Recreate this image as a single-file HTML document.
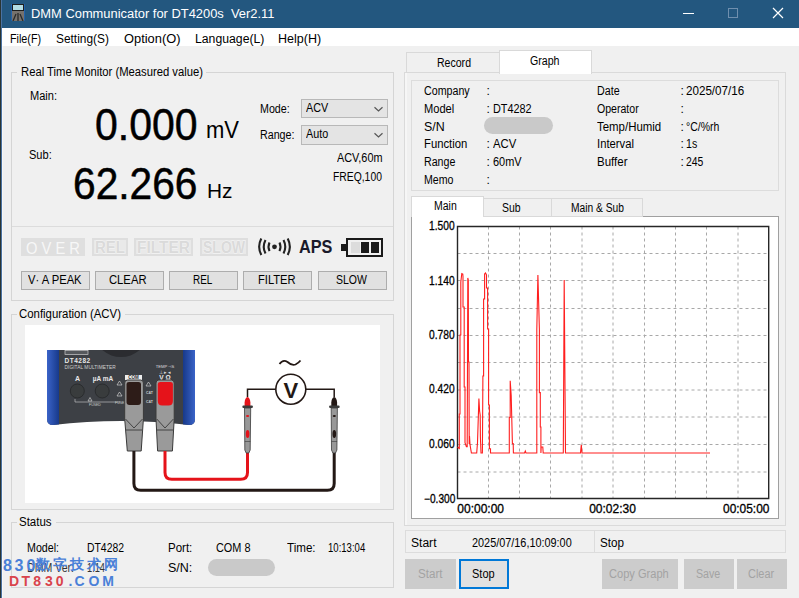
<!DOCTYPE html>
<html><head><meta charset="utf-8"><style>
html,body{margin:0;padding:0;}
body{width:799px;height:598px;overflow:hidden;position:relative;background:#f0f0f0;font-family:'Liberation Sans', sans-serif;}
.a{position:absolute;}
.t{white-space:pre;transform-origin:0 0;}
</style></head><body>
<div class="a" style="left:0px;top:0px;width:799px;height:28px;background:#23577f;"></div>
<div class="a" style="left:0px;top:0px;width:1px;height:598px;background:#2a3533;"></div>
<div class="a" style="left:1px;top:0px;width:1px;height:598px;background:#4a72a2;"></div>
<div class="a" style="left:2px;top:28px;width:1px;height:570px;background:#f7f7f7;"></div>
<div class="a" style="left:11px;top:4px;width:14px;height:17px;background:#2262ac;"></div>
<div class="a" style="left:12px;top:4px;width:12px;height:17px;background:#1e1e1e;"></div>
<div class="a" style="left:13px;top:5px;width:10px;height:5px;background:#b3dde4;"></div>
<div class="a" style="left:12px;top:11px;width:12px;height:10px;background:#77726d;"></div>
<svg class="a" style="left:12px;top:11px" width="12" height="10"><path d="M1 10 L4 3 M6 10 L6 2 M11 10 L8 3" stroke="#2a2a2a" stroke-width="1.3"/></svg>
<div class="a t" style="left:31.20px;top:8.02px;font-size:12.5px;line-height:12.5px;font-weight:400;color:#ffffff;font-family:'Liberation Sans', sans-serif;transform:scaleX(1.0319);">DMM Communicator for DT4200s&nbsp;&nbsp;Ver2.11</div>
<div class="a" style="left:683px;top:13px;width:11px;height:1px;background:#ffffff;"></div>
<div class="a" style="left:728px;top:8px;width:10px;height:10px;box-sizing:border-box;border:1px solid #6f8fae;"></div>
<svg class="a" style="left:772px;top:7px" width="12" height="12"><path d="M1 1L11 11M11 1L1 11" stroke="#fff" stroke-width="1.2"/></svg>
<div class="a" style="left:2px;top:28px;width:797px;height:18px;background:#ffffff;"></div>
<div class="a t" style="left:9.60px;top:32.74px;font-size:12px;line-height:12px;font-weight:400;color:#000;font-family:'Liberation Sans', sans-serif;transform:scaleX(0.8970);">File(F)</div>
<div class="a t" style="left:55.70px;top:32.74px;font-size:12px;line-height:12px;font-weight:400;color:#000;font-family:'Liberation Sans', sans-serif;transform:scaleX(0.9914);">Setting(S)</div>
<div class="a t" style="left:123.50px;top:32.74px;font-size:12px;line-height:12px;font-weight:400;color:#000;font-family:'Liberation Sans', sans-serif;transform:scaleX(1.0724);">Option(O)</div>
<div class="a t" style="left:194.60px;top:32.74px;font-size:12px;line-height:12px;font-weight:400;color:#000;font-family:'Liberation Sans', sans-serif;transform:scaleX(1.0197);">Language(L)</div>
<div class="a t" style="left:278.40px;top:32.74px;font-size:12px;line-height:12px;font-weight:400;color:#000;font-family:'Liberation Sans', sans-serif;transform:scaleX(1.0425);">Help(H)</div>
<div class="a" style="left:11px;top:72px;width:383px;height:229px;box-sizing:border-box;border:1px solid #d5d5d5;"></div>
<div class="a" style="left:17px;top:66px;width:189px;height:12px;background:#f0f0f0;"></div>
<div class="a t" style="left:20.50px;top:65.84px;font-size:12px;line-height:12px;font-weight:400;color:#000;font-family:'Liberation Sans', sans-serif;transform:scaleX(0.9378);">Real Time Monitor (Measured value)</div>
<div class="a t" style="left:29.90px;top:90.24px;font-size:12px;line-height:12px;font-weight:400;color:#000;font-family:'Liberation Sans', sans-serif;transform:scaleX(0.9201);">Main:</div>
<div class="a t" style="left:29.30px;top:149.14px;font-size:12px;line-height:12px;font-weight:400;color:#000;font-family:'Liberation Sans', sans-serif;transform:scaleX(0.9195);">Sub:</div>
<div class="a t" style="left:95.30px;top:103.15px;font-size:44px;line-height:44px;font-weight:400;color:#000;font-family:'Liberation Sans', sans-serif;transform:scaleX(0.9309);-webkit-text-stroke:0.5px #000;">0.000</div>
<div class="a t" style="left:206.30px;top:119.13px;font-size:23px;line-height:23px;font-weight:400;color:#000;font-family:'Liberation Sans', sans-serif;transform:scaleX(0.9565);">mV</div>
<div class="a t" style="left:72.50px;top:162.78px;font-size:43.5px;line-height:43.5px;font-weight:400;color:#000;font-family:'Liberation Sans', sans-serif;transform:scaleX(0.9357);-webkit-text-stroke:0.5px #000;">62.266</div>
<div class="a t" style="left:207.40px;top:181.27px;font-size:20px;line-height:20px;font-weight:400;color:#000;font-family:'Liberation Sans', sans-serif;transform:scaleX(1.0428);">Hz</div>
<div class="a t" style="left:259.70px;top:103.24px;font-size:12px;line-height:12px;font-weight:400;color:#000;font-family:'Liberation Sans', sans-serif;transform:scaleX(0.8903);">Mode:</div>
<div class="a t" style="left:259.70px;top:129.44px;font-size:12px;line-height:12px;font-weight:400;color:#000;font-family:'Liberation Sans', sans-serif;transform:scaleX(0.8914);">Range:</div>
<div class="a" style="left:301px;top:99px;width:87px;height:19px;background:#e4e4e4;box-sizing:border-box;border:1px solid #b8b8b8;"></div>
<div class="a t" style="left:305.70px;top:102.24px;font-size:12px;line-height:12px;font-weight:400;color:#000;font-family:'Liberation Sans', sans-serif;transform:scaleX(0.8992);">ACV</div>
<svg class="a" style="left:372px;top:105px" width="12" height="8"><path d="M2.5 2.2L6.5 6L10.5 2.2" stroke="#555" stroke-width="1.2" fill="none"/></svg>
<div class="a" style="left:301px;top:125px;width:87px;height:19.5px;background:#e4e4e4;box-sizing:border-box;border:1px solid #b8b8b8;"></div>
<div class="a t" style="left:305.70px;top:128.24px;font-size:12px;line-height:12px;font-weight:400;color:#000;font-family:'Liberation Sans', sans-serif;transform:scaleX(0.8992);">Auto</div>
<svg class="a" style="left:372px;top:131px" width="12" height="8"><path d="M2.5 2.2L6.5 6L10.5 2.2" stroke="#555" stroke-width="1.2" fill="none"/></svg>
<div class="a t" style="left:336.80px;top:151.54px;font-size:12px;line-height:12px;font-weight:400;color:#000;font-family:'Liberation Sans', sans-serif;transform:scaleX(0.9055);">ACV,60m</div>
<div class="a t" style="left:333.40px;top:170.84px;font-size:12px;line-height:12px;font-weight:400;color:#000;font-family:'Liberation Sans', sans-serif;transform:scaleX(0.8624);">FREQ,100</div>
<div class="a" style="left:12px;top:226px;width:381px;height:1px;background:#dcdcdc;"></div>
<div class="a" style="left:21px;top:238px;width:64px;height:18px;background:#dfdfdf;"></div>
<div class="a t" style="left:26.00px;top:240.03px;font-size:16.5px;line-height:16.5px;font-weight:400;color:#f7f7f7;font-family:'Liberation Sans', sans-serif;transform:scaleX(0.8923);">O V E R</div>
<div class="a" style="left:92px;top:238px;width:36px;height:18px;background:#e9e9e9;box-sizing:border-box;border:2px solid #dedede;"></div>
<div class="a t" style="left:95.00px;top:239.96px;font-size:16px;line-height:16px;font-weight:700;color:#dadada;font-family:'Liberation Sans', sans-serif;transform:scaleX(0.9375);-webkit-text-stroke:0.8px #f7f7f7;paint-order:stroke fill;">REL</div>
<div class="a" style="left:134px;top:238px;width:59px;height:18px;background:#e9e9e9;box-sizing:border-box;border:2px solid #dedede;"></div>
<div class="a t" style="left:137.00px;top:239.96px;font-size:16px;line-height:16px;font-weight:700;color:#dadada;font-family:'Liberation Sans', sans-serif;transform:scaleX(0.9669);-webkit-text-stroke:0.8px #f7f7f7;paint-order:stroke fill;">FILTER</div>
<div class="a" style="left:200px;top:238px;width:48px;height:18px;background:#e9e9e9;box-sizing:border-box;border:2px solid #dedede;"></div>
<div class="a t" style="left:203.00px;top:239.96px;font-size:16px;line-height:16px;font-weight:700;color:#dadada;font-family:'Liberation Sans', sans-serif;transform:scaleX(0.8750);-webkit-text-stroke:0.8px #f7f7f7;paint-order:stroke fill;">SLOW</div>
<svg class="a" style="left:256px;top:236px" width="38" height="22">
<circle cx="18.5" cy="10.8" r="2.4" fill="#222"/>
<path d="M13.5 6.5 Q11.5 10.8 13.5 15.1" stroke="#222" stroke-width="2.1" fill="none"/>
<path d="M9.5 4 Q6 10.8 9.5 17.6" stroke="#222" stroke-width="2.1" fill="none"/>
<path d="M5.3 2.5 Q1 10.8 5.3 19" stroke="#222" stroke-width="2.1" fill="none"/>
<path d="M23.5 6.5 Q25.5 10.8 23.5 15.1" stroke="#222" stroke-width="2.1" fill="none"/>
<path d="M27.5 4 Q31 10.8 27.5 17.6" stroke="#222" stroke-width="2.1" fill="none"/>
<path d="M31.7 2.5 Q36 10.8 31.7 19" stroke="#222" stroke-width="2.1" fill="none"/>
</svg>
<div class="a t" style="left:299.20px;top:237.84px;font-size:18.5px;line-height:18.5px;font-weight:700;color:#1a1a2a;font-family:'Liberation Sans', sans-serif;transform:scaleX(0.8779);">APS</div>
<div class="a" style="left:341px;top:244px;width:6px;height:7px;background:#1a1a1a;"></div>
<div class="a" style="left:346px;top:238px;width:37px;height:19px;background:#f0f0f0;box-sizing:border-box;border:2px solid #1a1a1a;"></div>
<div class="a" style="left:351px;top:242px;width:9px;height:11px;background:#dcdcdc;"></div>
<div class="a" style="left:361px;top:242px;width:8px;height:11px;background:#1a1a1a;"></div>
<div class="a" style="left:371px;top:242px;width:8px;height:11px;background:#1a1a1a;"></div>
<div class="a" style="left:21px;top:271px;width:69px;height:19px;background:#e1e1e1;box-sizing:border-box;border:1px solid #adadad;"></div>
<div class="a t" style="left:27.70px;top:274.14px;font-size:12px;line-height:12px;font-weight:400;color:#000;font-family:'Liberation Sans', sans-serif;transform:scaleX(0.9342);">V· A PEAK</div>
<div class="a" style="left:95px;top:271px;width:69px;height:19px;background:#e1e1e1;box-sizing:border-box;border:1px solid #adadad;"></div>
<div class="a t" style="left:109.05px;top:274.14px;font-size:12px;line-height:12px;font-weight:400;color:#000;font-family:'Liberation Sans', sans-serif;transform:scaleX(0.9371);">CLEAR</div>
<div class="a" style="left:169px;top:271px;width:69px;height:19px;background:#e1e1e1;box-sizing:border-box;border:1px solid #adadad;"></div>
<div class="a t" style="left:192.75px;top:274.14px;font-size:12px;line-height:12px;font-weight:400;color:#000;font-family:'Liberation Sans', sans-serif;transform:scaleX(0.8268);">REL</div>
<div class="a" style="left:243px;top:271px;width:69px;height:19px;background:#e1e1e1;box-sizing:border-box;border:1px solid #adadad;"></div>
<div class="a t" style="left:258.40px;top:274.14px;font-size:12px;line-height:12px;font-weight:400;color:#000;font-family:'Liberation Sans', sans-serif;transform:scaleX(0.9295);">FILTER</div>
<div class="a" style="left:318px;top:271px;width:69px;height:19px;background:#e1e1e1;box-sizing:border-box;border:1px solid #adadad;"></div>
<div class="a t" style="left:336.45px;top:274.14px;font-size:12px;line-height:12px;font-weight:400;color:#000;font-family:'Liberation Sans', sans-serif;transform:scaleX(0.8743);">SLOW</div>
<div class="a" style="left:11px;top:314px;width:383px;height:196px;box-sizing:border-box;border:1px solid #d5d5d5;"></div>
<div class="a" style="left:17px;top:308px;width:108px;height:12px;background:#f0f0f0;"></div>
<div class="a t" style="left:19.20px;top:307.64px;font-size:12px;line-height:12px;font-weight:400;color:#000;font-family:'Liberation Sans', sans-serif;transform:scaleX(0.9498);">Configuration (ACV)</div>
<div class="a" style="left:25px;top:325px;width:355px;height:178px;background:#ffffff;"></div>
<svg class="a" style="left:0;top:0" width="799" height="598">
<defs>
<clipPath id="bodyclip"><path d="M47 350 H195 V419 Q195 425 189 425 Q121 417 53 425 Q47 425 47 419 Z"/></clipPath>
<linearGradient id="blueL" x1="0" x2="1"><stop offset="0" stop-color="#3a63c8"/><stop offset="1" stop-color="#17398a"/></linearGradient>
<linearGradient id="blueR" x1="0" x2="1"><stop offset="0" stop-color="#17398a"/><stop offset="1" stop-color="#3a63c8"/></linearGradient>
</defs>
<g clip-path="url(#bodyclip)">
<rect x="47" y="350" width="148" height="80" fill="#3d4045"/>
<rect x="47" y="350" width="12" height="80" fill="url(#blueL)"/>
<rect x="183" y="350" width="12" height="80" fill="url(#blueR)"/>
<ellipse cx="121" cy="336" rx="25" ry="21" fill="#2b2c30"/>
</g>
<rect x="65" y="350.5" width="23" height="4" fill="#55585c" stroke="#ccc" stroke-width="0.7"/>
<text x="64.5" y="363" font-family="Liberation Sans" font-weight="700" font-size="6.5" fill="#e8e8e8" letter-spacing="0.5">DT4282</text>
<text x="64.5" y="368.5" font-family="Liberation Sans" font-size="4.8" fill="#cfcfcf" letter-spacing="0.05">DIGITAL MULTIMETER</text>
<text x="77.5" y="381" font-family="Liberation Sans" font-weight="700" font-size="7" fill="#e8e8e8" text-anchor="middle">A</text>
<text x="103" y="381" font-family="Liberation Sans" font-weight="700" font-size="6.5" fill="#e8e8e8" text-anchor="middle">µA mA</text>
<circle cx="77.3" cy="391" r="7" fill="#393c3d" stroke="#2a2c2e" stroke-width="1"/>
<circle cx="102.2" cy="391" r="7" fill="#393c3d" stroke="#2a2c2e" stroke-width="1"/>
<path d="M75 399 V402 H120" stroke="#bbb" stroke-width="0.7" fill="none"/>
<path d="M88 401 l2 -3.5 l2 3.5 z M117 385 l2.5 -4 l2.5 4 z M117 396 l2.5 -4 l2.5 4 z M146 386 l2.5 -4 l2.5 4z" fill="none" stroke="#ccc" stroke-width="0.7"/>
<text x="89" y="406" font-family="Liberation Sans" font-size="3.5" fill="#ccc">FUSED</text>
<text x="115" y="404" font-family="Liberation Sans" font-size="3.5" fill="#ccc">FUSED</text>
<text x="146" y="394" font-family="Liberation Sans" font-weight="700" font-size="3.5" fill="#ccc">CAT</text>
<text x="146" y="403" font-family="Liberation Sans" font-weight="700" font-size="3.5" fill="#ccc">CAT</text>
<rect x="125" y="375" width="17" height="5" fill="#eee"/>
<text x="133.5" y="379.3" font-family="Liberation Sans" font-weight="700" font-size="4.5" fill="#333" text-anchor="middle">COM</text>
<text x="165" y="367.5" font-family="Liberation Sans" font-size="4.2" fill="#ddd" text-anchor="middle">TEMP ⊣S</text>
<text x="165" y="373.5" font-family="Liberation Sans" font-size="4.5" fill="#ddd" text-anchor="middle">⊥ ▸ ◂</text>
<text x="165" y="380" font-family="Liberation Sans" font-weight="700" font-size="6.5" fill="#eee" text-anchor="middle">V Ω</text>
<!-- COM plug -->
<path d="M124.7 383 Q124.7 380 127.5 380 H140.6 Q143.4 380 143.4 383 V419 L141.2 451 H127.3 L124.7 419 Z" fill="#9a9a9a" stroke="#3a3a3a" stroke-width="1"/>
<path d="M126.5 384 Q126.5 382 129 382 H138.5 Q141 382 141 384 V402 Q141 405 138 405 H129.5 Q126.5 405 126.5 402 Z" fill="#2d1c18"/>
<path d="M125.5 419 L134 428 L142.5 419 M126 430 H142" stroke="#3a3a3a" stroke-width="0.9" fill="none"/>
<!-- red plug -->
<path d="M156 383 Q156 380 158.8 380 H171.4 Q174.2 380 174.2 383 V419 L172.4 451 H157.6 L156 419 Z" fill="#9a9a9a" stroke="#3a3a3a" stroke-width="1"/>
<path d="M157.8 384 Q157.8 382 160.3 382 H170.4 Q172.9 382 172.9 384 V401 Q172.9 405.5 168.5 405.5 H162.2 Q157.8 405.5 157.8 401 Z" fill="#e5131a"/>
<path d="M156.8 419 L165 428 L173.4 419 M157 430 H173" stroke="#3a3a3a" stroke-width="0.9" fill="none"/>
<!-- wires -->
<path d="M133.9 451 V483.5 Q133.9 490.3 140.7 490.3 H327.4 Q334.2 490.3 334.2 483.5 V452" stroke="#231815" stroke-width="3" fill="none"/>
<path d="M165 451 V472.5 Q165 479.3 171.8 479.3 H240.7 Q247.5 479.3 247.5 472.5 V452" stroke="#e5131a" stroke-width="3" fill="none"/>
<!-- meter -->
<path d="M247.5 397 V389.3 H275.8 M305.8 389.3 H334.2 V397" stroke="#231815" stroke-width="1.5" fill="none"/>
<circle cx="290.8" cy="389.3" r="15" fill="#fff" stroke="#231815" stroke-width="1.6"/>
<text x="290.8" y="397.5" font-family="Liberation Sans" font-weight="700" font-size="22" fill="#231815" text-anchor="middle">V</text>
<path d="M279.5 364 Q283 359 287.5 362 Q292 366 295.5 364.5 Q298.5 363 300.5 360.5" stroke="#231815" stroke-width="1.8" fill="none"/>
<!-- red probe -->
<path d="M244.6 406 V402.5 Q245 397.5 247.5 397 Q250 397.5 250.4 402.5 V406 Z" fill="#e5131a"/>
<rect x="242.4" y="405.5" width="10.5" height="2.5" rx="1" fill="#3a3a3a"/>
<path d="M244.5 408 H250.7 L250.2 450 L248.8 453 H246.2 L244.8 450 Z" fill="#989898" stroke="#3a3a3a" stroke-width="0.8"/>
<ellipse cx="247.6" cy="416" rx="1.6" ry="0.9" fill="#e5131a"/>
<ellipse cx="247.6" cy="434" rx="1.8" ry="4" fill="#e5131a"/>
<line x1="244.8" y1="441.5" x2="250.4" y2="441.5" stroke="#3a3a3a" stroke-width="0.6"/>
<!-- black probe -->
<path d="M331.3 406 V402.5 Q331.7 397.5 334.2 397 Q336.7 397.5 337.1 402.5 V406 Z" fill="#231815"/>
<rect x="329.1" y="405.5" width="10.5" height="2.5" rx="1" fill="#3a3a3a"/>
<path d="M331.2 408 H337.4 L336.9 450 L335.5 453 H332.9 L331.5 450 Z" fill="#989898" stroke="#3a3a3a" stroke-width="0.8"/>
<ellipse cx="334.3" cy="416" rx="1.6" ry="0.9" fill="#231815"/>
<ellipse cx="334.3" cy="434" rx="1.8" ry="4" fill="#231815"/>
<line x1="331.5" y1="441.5" x2="337.1" y2="441.5" stroke="#3a3a3a" stroke-width="0.6"/>
</svg>
<div class="a" style="left:11px;top:522px;width:383px;height:66px;box-sizing:border-box;border:1px solid #d5d5d5;"></div>
<div class="a" style="left:17px;top:516px;width:39px;height:12px;background:#f0f0f0;"></div>
<div class="a t" style="left:19.10px;top:515.64px;font-size:12px;line-height:12px;font-weight:400;color:#000;font-family:'Liberation Sans', sans-serif;transform:scaleX(0.9579);">Status</div>
<div class="a t" style="left:27.20px;top:541.94px;font-size:12px;line-height:12px;font-weight:400;color:#000;font-family:'Liberation Sans', sans-serif;transform:scaleX(0.8881);">Model:</div>
<div class="a t" style="left:87.30px;top:541.94px;font-size:12px;line-height:12px;font-weight:400;color:#000;font-family:'Liberation Sans', sans-serif;transform:scaleX(0.8664);">DT4282</div>
<div class="a t" style="left:167.70px;top:542.04px;font-size:12px;line-height:12px;font-weight:400;color:#000;font-family:'Liberation Sans', sans-serif;transform:scaleX(0.9588);">Port:</div>
<div class="a t" style="left:215.50px;top:542.04px;font-size:12px;line-height:12px;font-weight:400;color:#000;font-family:'Liberation Sans', sans-serif;transform:scaleX(0.9075);">COM 8</div>
<div class="a t" style="left:287.10px;top:542.04px;font-size:12px;line-height:12px;font-weight:400;color:#000;font-family:'Liberation Sans', sans-serif;transform:scaleX(0.9674);">Time:</div>
<div class="a t" style="left:327.80px;top:542.04px;font-size:12px;line-height:12px;font-weight:400;color:#000;font-family:'Liberation Sans', sans-serif;transform:scaleX(0.7963);">10:13:04</div>
<div class="a t" style="left:27.20px;top:561.84px;font-size:12px;line-height:12px;font-weight:400;color:#333;font-family:'Liberation Sans', sans-serif;transform:scaleX(0.8811);">DMM Ver:</div>
<div class="a t" style="left:87.30px;top:561.84px;font-size:12px;line-height:12px;font-weight:400;color:#333;font-family:'Liberation Sans', sans-serif;transform:scaleX(0.7706);">1.14</div>
<div class="a t" style="left:167.70px;top:562.44px;font-size:12px;line-height:12px;font-weight:400;color:#000;font-family:'Liberation Sans', sans-serif;transform:scaleX(1.0410);">S/N:</div>
<div class="a" style="left:208px;top:559px;width:67px;height:17px;background:#c9c9c9;border-radius:9px;"></div>
<div class="a" style="left:3.0px;top:558px;font-family:'Liberation Sans', sans-serif;font-weight:700;font-size:16px;line-height:16px;color:#4a80d8;">8</div>
<div class="a" style="left:14.6px;top:558px;font-family:'Liberation Sans', sans-serif;font-weight:700;font-size:16px;line-height:16px;color:#4a80d8;">3</div>
<div class="a" style="left:26.4px;top:558px;font-family:'Liberation Sans', sans-serif;font-weight:700;font-size:16px;line-height:16px;color:#4a80d8;">0</div>
<div class="a" style="left:35.5px;top:557px;font-family:'Liberation Sans', sans-serif;font-weight:700;font-size:14px;line-height:15px;color:#4a80d8;">数</div>
<div class="a" style="left:53px;top:557px;font-family:'Liberation Sans', sans-serif;font-weight:700;font-size:14px;line-height:15px;color:#4a80d8;">字</div>
<div class="a" style="left:70px;top:557px;font-family:'Liberation Sans', sans-serif;font-weight:700;font-size:14px;line-height:15px;color:#4a80d8;">技</div>
<div class="a" style="left:87px;top:557px;font-family:'Liberation Sans', sans-serif;font-weight:700;font-size:14px;line-height:15px;color:#4a80d8;">术</div>
<div class="a" style="left:104px;top:557px;font-family:'Liberation Sans', sans-serif;font-weight:700;font-size:14px;line-height:15px;color:#4a80d8;">网</div>
<div class="a" style="left:9.0px;top:574px;font-family:'Liberation Sans', sans-serif;font-weight:700;font-size:14px;line-height:14px;color:#d9444c;">D</div>
<div class="a" style="left:21.6px;top:574px;font-family:'Liberation Sans', sans-serif;font-weight:700;font-size:14px;line-height:14px;color:#d9444c;">T</div>
<div class="a" style="left:33.2px;top:574px;font-family:'Liberation Sans', sans-serif;font-weight:700;font-size:14px;line-height:14px;color:#d9444c;">8</div>
<div class="a" style="left:45.0px;top:574px;font-family:'Liberation Sans', sans-serif;font-weight:700;font-size:14px;line-height:14px;color:#d9444c;">3</div>
<div class="a" style="left:55.7px;top:574px;font-family:'Liberation Sans', sans-serif;font-weight:700;font-size:14px;line-height:14px;color:#d9444c;">0</div>
<div class="a" style="left:68.5px;top:574px;font-family:'Liberation Sans', sans-serif;font-weight:700;font-size:14px;line-height:14px;color:#4a80d8;">.</div>
<div class="a" style="left:74.5px;top:574px;font-family:'Liberation Sans', sans-serif;font-weight:700;font-size:14px;line-height:14px;color:#4a80d8;">C</div>
<div class="a" style="left:88.5px;top:574px;font-family:'Liberation Sans', sans-serif;font-weight:700;font-size:14px;line-height:14px;color:#4a80d8;">O</div>
<div class="a" style="left:102.2px;top:574px;font-family:'Liberation Sans', sans-serif;font-weight:700;font-size:14px;line-height:14px;color:#4a80d8;">M</div>
<div class="a" style="left:404px;top:72px;width:382px;height:454px;background:#f0f0f0;box-sizing:border-box;border:1px solid #dadada;"></div>
<div class="a" style="left:405px;top:73px;width:2px;height:452px;background:#f6f6f6;"></div>
<div class="a" style="left:406px;top:52px;width:94px;height:21px;background:#f0f0f0;box-sizing:border-box;border:1px solid #d9d9d9;"></div>
<div class="a" style="left:499px;top:50px;width:93px;height:24px;background:#ffffff;box-sizing:border-box;border:1px solid #d9d9d9;border-bottom:none;"></div>
<div class="a t" style="left:436.80px;top:56.84px;font-size:12px;line-height:12px;font-weight:400;color:#000;font-family:'Liberation Sans', sans-serif;transform:scaleX(0.8788);">Record</div>
<div class="a t" style="left:530.05px;top:54.84px;font-size:12px;line-height:12px;font-weight:400;color:#000;font-family:'Liberation Sans', sans-serif;transform:scaleX(0.8843);">Graph</div>
<div class="a" style="left:411px;top:80px;width:368px;height:111px;box-sizing:border-box;border:1px solid #dcdcdc;"></div>
<div class="a t" style="left:423.80px;top:85.14px;font-size:12px;line-height:12px;font-weight:400;color:#000;font-family:'Liberation Sans', sans-serif;transform:scaleX(0.8898);">Company</div>
<div class="a t" style="left:486.60px;top:85.14px;font-size:12px;line-height:12px;font-weight:400;color:#000;font-family:'Liberation Sans', sans-serif;">:</div>
<div class="a t" style="left:423.80px;top:102.89px;font-size:12px;line-height:12px;font-weight:400;color:#000;font-family:'Liberation Sans', sans-serif;transform:scaleX(0.9239);">Model</div>
<div class="a t" style="left:486.60px;top:102.89px;font-size:12px;line-height:12px;font-weight:400;color:#000;font-family:'Liberation Sans', sans-serif;">:</div>
<div class="a t" style="left:493.20px;top:102.89px;font-size:12px;line-height:12px;font-weight:400;color:#000;font-family:'Liberation Sans', sans-serif;transform:scaleX(0.9039);">DT4282</div>
<div class="a t" style="left:423.80px;top:120.64px;font-size:12px;line-height:12px;font-weight:400;color:#000;font-family:'Liberation Sans', sans-serif;transform:scaleX(1.0342);">S/N</div>
<div class="a t" style="left:423.80px;top:138.39px;font-size:12px;line-height:12px;font-weight:400;color:#000;font-family:'Liberation Sans', sans-serif;transform:scaleX(0.9407);">Function</div>
<div class="a t" style="left:486.60px;top:138.39px;font-size:12px;line-height:12px;font-weight:400;color:#000;font-family:'Liberation Sans', sans-serif;">:</div>
<div class="a t" style="left:493.20px;top:138.39px;font-size:12px;line-height:12px;font-weight:400;color:#000;font-family:'Liberation Sans', sans-serif;transform:scaleX(0.9438);">ACV</div>
<div class="a t" style="left:423.80px;top:156.14px;font-size:12px;line-height:12px;font-weight:400;color:#000;font-family:'Liberation Sans', sans-serif;transform:scaleX(0.8876);">Range</div>
<div class="a t" style="left:486.60px;top:156.14px;font-size:12px;line-height:12px;font-weight:400;color:#000;font-family:'Liberation Sans', sans-serif;">:</div>
<div class="a t" style="left:493.20px;top:156.14px;font-size:12px;line-height:12px;font-weight:400;color:#000;font-family:'Liberation Sans', sans-serif;transform:scaleX(0.9120);">60mV</div>
<div class="a t" style="left:423.80px;top:173.89px;font-size:12px;line-height:12px;font-weight:400;color:#000;font-family:'Liberation Sans', sans-serif;transform:scaleX(0.8847);">Memo</div>
<div class="a t" style="left:486.60px;top:173.89px;font-size:12px;line-height:12px;font-weight:400;color:#000;font-family:'Liberation Sans', sans-serif;">:</div>
<div class="a" style="left:484px;top:117px;width:69px;height:17px;background:#c9c9c9;border-radius:9px;"></div>
<div class="a t" style="left:597.10px;top:85.14px;font-size:12px;line-height:12px;font-weight:400;color:#000;font-family:'Liberation Sans', sans-serif;transform:scaleX(0.8912);">Date</div>
<div class="a t" style="left:680.40px;top:85.14px;font-size:12px;line-height:12px;font-weight:400;color:#000;font-family:'Liberation Sans', sans-serif;">:</div>
<div class="a t" style="left:686.30px;top:85.14px;font-size:12px;line-height:12px;font-weight:400;color:#000;font-family:'Liberation Sans', sans-serif;transform:scaleX(0.9690);">2025/07/16</div>
<div class="a t" style="left:597.10px;top:102.89px;font-size:12px;line-height:12px;font-weight:400;color:#000;font-family:'Liberation Sans', sans-serif;transform:scaleX(0.8805);">Operator</div>
<div class="a t" style="left:680.40px;top:102.89px;font-size:12px;line-height:12px;font-weight:400;color:#000;font-family:'Liberation Sans', sans-serif;">:</div>
<div class="a t" style="left:597.10px;top:120.64px;font-size:12px;line-height:12px;font-weight:400;color:#000;font-family:'Liberation Sans', sans-serif;transform:scaleX(0.9531);">Temp/Humid</div>
<div class="a t" style="left:680.40px;top:120.64px;font-size:12px;line-height:12px;font-weight:400;color:#000;font-family:'Liberation Sans', sans-serif;">:</div>
<div class="a t" style="left:686.30px;top:120.64px;font-size:12px;line-height:12px;font-weight:400;color:#000;font-family:'Liberation Sans', sans-serif;transform:scaleX(0.8731);">°C/%rh</div>
<div class="a t" style="left:597.10px;top:138.39px;font-size:12px;line-height:12px;font-weight:400;color:#000;font-family:'Liberation Sans', sans-serif;transform:scaleX(0.9375);">Interval</div>
<div class="a t" style="left:680.40px;top:138.39px;font-size:12px;line-height:12px;font-weight:400;color:#000;font-family:'Liberation Sans', sans-serif;">:</div>
<div class="a t" style="left:686.30px;top:138.39px;font-size:12px;line-height:12px;font-weight:400;color:#000;font-family:'Liberation Sans', sans-serif;transform:scaleX(0.8828);">1s</div>
<div class="a t" style="left:597.10px;top:156.14px;font-size:12px;line-height:12px;font-weight:400;color:#000;font-family:'Liberation Sans', sans-serif;transform:scaleX(0.9587);">Buffer</div>
<div class="a t" style="left:680.40px;top:156.14px;font-size:12px;line-height:12px;font-weight:400;color:#000;font-family:'Liberation Sans', sans-serif;">:</div>
<div class="a t" style="left:686.30px;top:156.14px;font-size:12px;line-height:12px;font-weight:400;color:#000;font-family:'Liberation Sans', sans-serif;transform:scaleX(0.8686);">245</div>
<div class="a" style="left:411px;top:216px;width:368px;height:303px;background:#ffffff;box-sizing:border-box;border:1px solid #a0a0a0;"></div>
<div class="a" style="left:483px;top:198px;width:69px;height:19px;background:#f0f0f0;box-sizing:border-box;border:1px solid #d9d9d9;"></div>
<div class="a" style="left:551px;top:198px;width:92px;height:19px;background:#f0f0f0;box-sizing:border-box;border:1px solid #d9d9d9;"></div>
<div class="a" style="left:411px;top:196px;width:73px;height:21px;background:#ffffff;box-sizing:border-box;border:1px solid #d9d9d9;border-bottom:none;"></div>
<div class="a t" style="left:433.50px;top:199.84px;font-size:12px;line-height:12px;font-weight:400;color:#000;font-family:'Liberation Sans', sans-serif;transform:scaleX(0.8764);">Main</div>
<div class="a t" style="left:501.90px;top:201.64px;font-size:12px;line-height:12px;font-weight:400;color:#000;font-family:'Liberation Sans', sans-serif;transform:scaleX(0.8708);">Sub</div>
<div class="a t" style="left:571.20px;top:201.64px;font-size:12px;line-height:12px;font-weight:400;color:#000;font-family:'Liberation Sans', sans-serif;transform:scaleX(0.8542);">Main &amp; Sub</div>
<svg class="a" style="left:0;top:0" width="799" height="598">
<line x1="488.5" y1="226.5" x2="488.5" y2="498.5" stroke="#a8a8a8" stroke-width="1" stroke-dasharray="3,3"/>
<line x1="519.5" y1="226.5" x2="519.5" y2="498.5" stroke="#a8a8a8" stroke-width="1" stroke-dasharray="3,3"/>
<line x1="550.5" y1="226.5" x2="550.5" y2="498.5" stroke="#a8a8a8" stroke-width="1" stroke-dasharray="3,3"/>
<line x1="582.0" y1="226.5" x2="582.0" y2="498.5" stroke="#a8a8a8" stroke-width="1" stroke-dasharray="3,3"/>
<line x1="613.0" y1="226.5" x2="613.0" y2="498.5" stroke="#a8a8a8" stroke-width="1" stroke-dasharray="3,3"/>
<line x1="644.5" y1="226.5" x2="644.5" y2="498.5" stroke="#a8a8a8" stroke-width="1" stroke-dasharray="3,3"/>
<line x1="675.5" y1="226.5" x2="675.5" y2="498.5" stroke="#a8a8a8" stroke-width="1" stroke-dasharray="3,3"/>
<line x1="706.5" y1="226.5" x2="706.5" y2="498.5" stroke="#a8a8a8" stroke-width="1" stroke-dasharray="3,3"/>
<line x1="738.0" y1="226.5" x2="738.0" y2="498.5" stroke="#a8a8a8" stroke-width="1" stroke-dasharray="3,3"/>
<line x1="457.5" y1="253.5" x2="768.7" y2="253.5" stroke="#a8a8a8" stroke-width="1" stroke-dasharray="3,3"/>
<line x1="457.5" y1="280.5" x2="768.7" y2="280.5" stroke="#a8a8a8" stroke-width="1" stroke-dasharray="3,3"/>
<line x1="457.5" y1="308.5" x2="768.7" y2="308.5" stroke="#a8a8a8" stroke-width="1" stroke-dasharray="3,3"/>
<line x1="457.5" y1="335.5" x2="768.7" y2="335.5" stroke="#a8a8a8" stroke-width="1" stroke-dasharray="3,3"/>
<line x1="457.5" y1="362.5" x2="768.7" y2="362.5" stroke="#a8a8a8" stroke-width="1" stroke-dasharray="3,3"/>
<line x1="457.5" y1="390.0" x2="768.7" y2="390.0" stroke="#a8a8a8" stroke-width="1" stroke-dasharray="3,3"/>
<line x1="457.5" y1="417.0" x2="768.7" y2="417.0" stroke="#a8a8a8" stroke-width="1" stroke-dasharray="3,3"/>
<line x1="457.5" y1="444.5" x2="768.7" y2="444.5" stroke="#a8a8a8" stroke-width="1" stroke-dasharray="3,3"/>
<line x1="457.5" y1="472.0" x2="768.7" y2="472.0" stroke="#a8a8a8" stroke-width="1" stroke-dasharray="3,3"/>
<path d="M457.5 226.5 H768.7 V498.5 H457.5 Z" fill="none" stroke="#262626" stroke-width="1.4"/>
<polyline fill="none" stroke="#ff1f1f" stroke-width="1.1" points="457.6,447 458.6,448 459.3,448.5 459.3,414 460,414 460,335 460.8,335 460.8,282 461.8,273.5 462.8,274 463,276.5 463,307 464.2,307 464.2,387 465,387 465,442.7 466.4,446.8 467.2,446.8 467.8,278 468.3,280 468.5,362 469,362 469.2,444 469.5,436 470,444.7 471.4,453 476.7,453 477.5,442.7 478.9,398.6 479.6,411 480.2,415 480.4,437 481,453 482.4,453 482.9,376 483.6,376 483.6,299 484.6,299 484.6,274 485.5,273 486.5,275 486.5,288 487.6,288 487.6,329 488.6,329 488.6,405 489.4,405 489.4,448.8 490.5,448.8 490.5,453 509.3,453 509.3,417.4 510.2,417.4 510.2,380.8 511.2,395.6 511.8,419.6 512.4,443.5 513.2,443.5 513.4,453 524.5,453 525.3,451 526,453 536.8,453 536.8,330 537.9,275 539.4,330 539.4,392.6 540.3,392.6 540.3,427 540.9,427 540.9,453 541.2,447 542.8,447 543.2,453 563.3,453 564.2,280 565.5,453 580.5,453 581.3,444.7 582,453 710,453"/>
</svg>
<div class="a" style="left:405px;top:530px;width:190px;height:23px;box-sizing:border-box;border:1px solid #dcdcdc;"></div>
<div class="a" style="left:594px;top:530px;width:192px;height:23px;box-sizing:border-box;border:1px solid #dcdcdc;"></div>
<div class="a t" style="left:410.50px;top:536.84px;font-size:12px;line-height:12px;font-weight:400;color:#000;font-family:'Liberation Sans', sans-serif;transform:scaleX(1.0062);">Start</div>
<div class="a t" style="left:472.00px;top:536.84px;font-size:12px;line-height:12px;font-weight:400;color:#000;font-family:'Liberation Sans', sans-serif;transform:scaleX(0.9055);">2025/07/16,10:09:00</div>
<div class="a t" style="left:600.00px;top:536.64px;font-size:12px;line-height:12px;font-weight:400;color:#000;font-family:'Liberation Sans', sans-serif;transform:scaleX(0.9722);">Stop</div>
<div class="a" style="left:405px;top:559px;width:51px;height:30px;background:#cccccc;"></div>
<div class="a t" style="left:417.55px;top:567.84px;font-size:12px;line-height:12px;font-weight:400;color:#a3a3a3;font-family:'Liberation Sans', sans-serif;transform:scaleX(0.9667);">Start</div>
<div class="a" style="left:459px;top:559px;width:50px;height:30px;background:#e1e1e1;box-sizing:border-box;border:2px solid #0078d7;"></div>
<div class="a t" style="left:472.00px;top:567.84px;font-size:12px;line-height:12px;font-weight:400;color:#000;font-family:'Liberation Sans', sans-serif;transform:scaleX(0.9154);">Stop</div>
<div class="a" style="left:602px;top:559px;width:76px;height:30px;background:#cccccc;"></div>
<div class="a t" style="left:608.75px;top:567.84px;font-size:12px;line-height:12px;font-weight:400;color:#a3a3a3;font-family:'Liberation Sans', sans-serif;transform:scaleX(0.9227);">Copy Graph</div>
<div class="a" style="left:684px;top:559px;width:50px;height:30px;background:#cccccc;"></div>
<div class="a t" style="left:696.05px;top:567.84px;font-size:12px;line-height:12px;font-weight:400;color:#a3a3a3;font-family:'Liberation Sans', sans-serif;transform:scaleX(0.8882);">Save</div>
<div class="a" style="left:737px;top:559px;width:50px;height:30px;background:#cccccc;"></div>
<div class="a t" style="left:748.35px;top:567.84px;font-size:12px;line-height:12px;font-weight:400;color:#a3a3a3;font-family:'Liberation Sans', sans-serif;transform:scaleX(0.9098);">Clear</div>
<div class="a t" style="left:429.40px;top:220.14px;font-size:12px;line-height:12px;font-weight:400;color:#000;font-family:'Liberation Sans', sans-serif;transform:scaleX(0.8524);-webkit-text-stroke:0.3px #000;">1.500</div>
<div class="a t" style="left:429.40px;top:274.50px;font-size:12px;line-height:12px;font-weight:400;color:#000;font-family:'Liberation Sans', sans-serif;transform:scaleX(0.8524);-webkit-text-stroke:0.3px #000;">1.140</div>
<div class="a t" style="left:429.40px;top:328.86px;font-size:12px;line-height:12px;font-weight:400;color:#000;font-family:'Liberation Sans', sans-serif;transform:scaleX(0.8524);-webkit-text-stroke:0.3px #000;">0.780</div>
<div class="a t" style="left:429.40px;top:383.22px;font-size:12px;line-height:12px;font-weight:400;color:#000;font-family:'Liberation Sans', sans-serif;transform:scaleX(0.8524);-webkit-text-stroke:0.3px #000;">0.420</div>
<div class="a t" style="left:429.40px;top:437.58px;font-size:12px;line-height:12px;font-weight:400;color:#000;font-family:'Liberation Sans', sans-serif;transform:scaleX(0.8524);-webkit-text-stroke:0.3px #000;">0.060</div>
<div class="a t" style="left:423.70px;top:492.94px;font-size:12px;line-height:12px;font-weight:400;color:#000;font-family:'Liberation Sans', sans-serif;transform:scaleX(0.8449);-webkit-text-stroke:0.3px #000;">&minus;0.300</div>
<div class="a t" style="left:457.30px;top:502.64px;font-size:12px;line-height:12px;font-weight:400;color:#000;font-family:'Liberation Sans', sans-serif;-webkit-text-stroke:0.3px #000;">00:00:00</div>
<div class="a t" style="left:589.20px;top:502.64px;font-size:12px;line-height:12px;font-weight:400;color:#000;font-family:'Liberation Sans', sans-serif;-webkit-text-stroke:0.3px #000;">00:02:30</div>
<div class="a t" style="left:722.60px;top:502.64px;font-size:12px;line-height:12px;font-weight:400;color:#000;font-family:'Liberation Sans', sans-serif;transform:scaleX(0.9932);-webkit-text-stroke:0.3px #000;">00:05:00</div>
</body></html>
